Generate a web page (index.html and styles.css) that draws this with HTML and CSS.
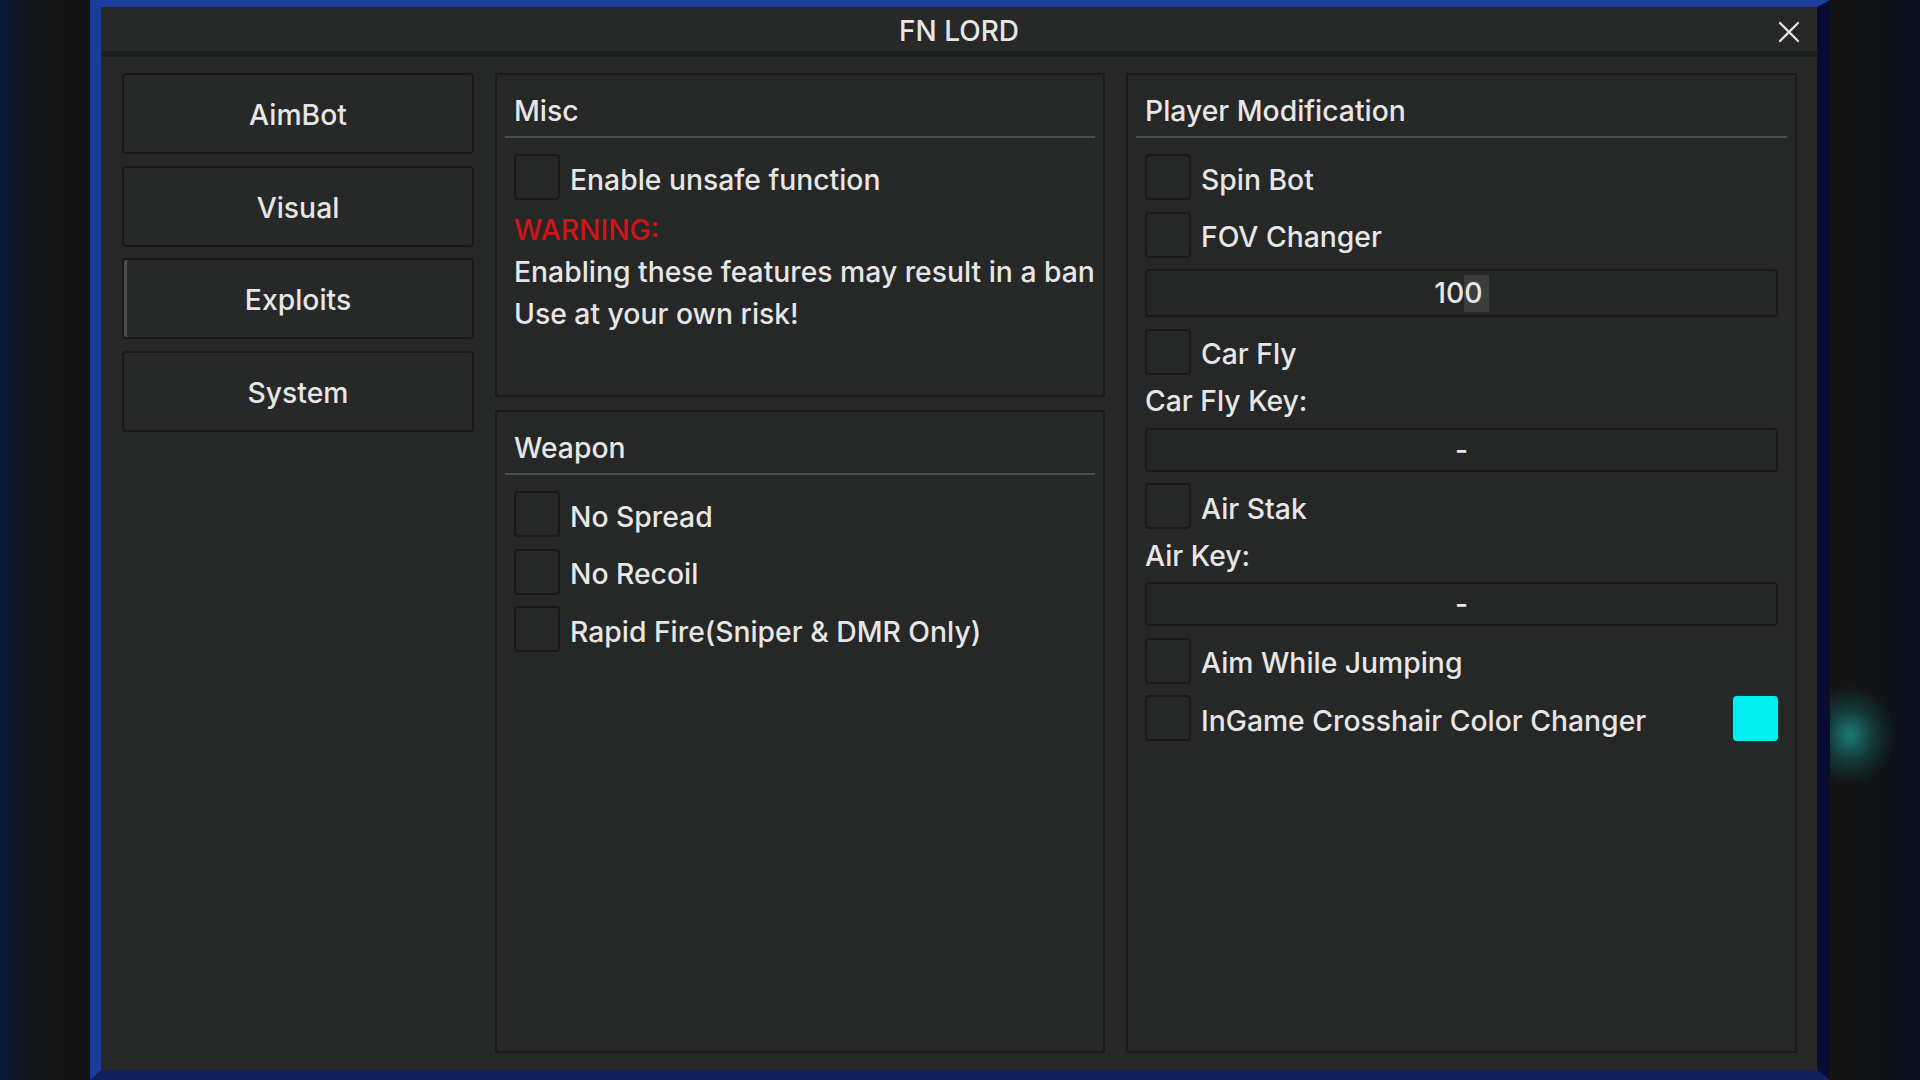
FILE: index.html
```html
<!DOCTYPE html>
<html lang="en">
<head>
    <meta charset="UTF-8">
    <meta name="viewport" content="width=device-width, initial-scale=1.0">
    <title>FN LORD</title>
    <link rel="stylesheet" href="styles.css">
</head>
<body>
    <div class="glow"></div>
    <div class="window">
        <div class="titlebar">
            <span></span>
            <span class="title">FN LORD</span>
            <button class="close" aria-label="Close">
                <svg width="22" height="22" viewBox="0 0 22 22">
                    <path d="M2 2 L20 20 M20 2 L2 20" stroke="#e6e6e6" stroke-width="2.4" stroke-linecap="round"/>
                </svg>
            </button>
        </div>

        <div class="content">
            <nav class="tabs">
                <button class="tab">AimBot</button>
                <button class="tab">Visual</button>
                <button class="tab active">Exploits</button>
                <button class="tab">System</button>
            </nav>

            <div class="column">
                <section class="panel misc">
                    <div class="panel-head">Misc</div>
                    <div class="panel-body">
                        <label class="check"><span class="box"></span>Enable unsafe function</label>
                        <div class="notes">
                            <div class="warning">WARNING:</div>
                            <div>Enabling these features may result in a ban</div>
                            <div>Use at your own risk!</div>
                        </div>
                    </div>
                </section>

                <section class="panel weapon">
                    <div class="panel-head">Weapon</div>
                    <div class="panel-body">
                        <label class="check"><span class="box"></span>No Spread</label>
                        <label class="check"><span class="box"></span>No Recoil</label>
                        <label class="check"><span class="box"></span>Rapid Fire(Sniper &amp; DMR Only)</label>
                    </div>
                </section>
            </div>

            <section class="panel player">
                <div class="panel-head">Player Modification</div>
                <div class="panel-body">
                    <label class="check"><span class="box"></span>Spin Bot</label>
                    <label class="check"><span class="box"></span>FOV Changer</label>
                    <div class="field slider">10<span class="grab">0</span></div>
                    <label class="check"><span class="box"></span>Car Fly</label>
                    <div class="caption">Car Fly Key:</div>
                    <div class="field key">-</div>
                    <label class="check"><span class="box"></span>Air Stak</label>
                    <div class="caption">Air Key:</div>
                    <div class="field key">-</div>
                    <label class="check"><span class="box"></span>Aim While Jumping</label>
                    <label class="check"><span class="box"></span>InGame Crosshair Color Changer<span class="swatch"></span></label>
                </div>
            </section>
        </div>
    </div>
</body>
</html>
```

FILE: styles.css
```css
html, body {
    margin: 0;
    width: 1920px;
    height: 1080px;
    overflow: hidden;
}
body {
    font-family: Inter, "Liberation Sans", sans-serif;
    font-size: 28.3px;
    font-weight: 500;
    color: #e6e6e6;
    background: linear-gradient(to right, #0b1a36 0, #121519 34px, #141414 70px, #141414 1830px, #121416 1870px, #07101f 1920px);
    position: relative;
}
.glow {
    position: absolute;
    left: 1805px;
    top: 685px;
    width: 90px;
    height: 100px;
    background: radial-gradient(closest-side, rgba(30, 190, 180, 0.6), rgba(20, 130, 130, 0.3) 55%, rgba(20, 20, 20, 0) 100%);
}
.window {
    position: relative;
    margin-left: 90px;
    width: 1740px;
    height: 1080px;
    box-sizing: border-box;
    border-style: solid;
    border-width: 7px 13px 10px 11px;
    border-color: #1c3f9f #090c30 #13205e #1a3d9c;
    background: #262727;
    display: flex;
    flex-direction: column;
}
.titlebar {
    height: 44px;
    border-bottom: 6px solid #1d1e1e;
    background: #272828;
    display: grid;
    grid-template-columns: 1fr auto 1fr;
    align-items: center;
    padding: 0 17px;
}
.title {
    font-size: 28px;
    padding-top: 4px;
}
.close {
    justify-self: end;
    background: none;
    border: none;
    padding: 0;
    width: 22px;
    height: 22px;
    margin-top: 5px;
}
.content {
    flex: 1;
    display: grid;
    grid-template-columns: 352px 610px 1fr;
    gap: 21px;
    padding: 16px 20px 17px 21px;
}
.tabs {
    display: flex;
    flex-direction: column;
    gap: 11.5px;
}
.tab {
    height: 81px;
    background: #272828;
    border: 2px solid #1a1a1a;
    border-radius: 4px;
    color: #e6e6e6;
    font-family: inherit;
    font-size: 28.3px;
    font-weight: 500;
    padding-top: 4px;
}
.tab.active {
    box-shadow: inset 3px 0 0 #4a4b4b;
}
.column {
    display: flex;
    flex-direction: column;
    gap: 13px;
}
.panel {
    background: #262727;
    border: 2px solid #1b1b1b;
    border-radius: 2px;
    padding: 0 8px;
}
.misc {
    height: 324px;
    box-sizing: border-box;
}
.weapon {
    flex: 1;
}
.panel-head {
    padding: 21px 9px 10px;
    line-height: 30px;
    border-bottom: 2px solid #4b4c4c;
}
.panel-body {
    padding: 16px 9px 0;
    display: flex;
    flex-direction: column;
    gap: 11.5px;
}
.check {
    display: flex;
    align-items: center;
    height: 46px;
    box-sizing: border-box;
    padding-top: 5px;
}
.box {
    width: 42px;
    height: 42px;
    border: 2px solid #1a1a1a;
    border-radius: 4px;
    background: #262727;
    margin-right: 10px;
    margin-top: -5px;
    flex-shrink: 0;
}
.notes {
    line-height: 42px;
    margin-top: -3px;
    white-space: nowrap;
}
.warning {
    color: #d01418;
}
.field {
    border: 2px solid #1a1a1a;
    border-radius: 4px;
    background: #252626;
    display: flex;
    justify-content: center;
    align-items: center;
}
.slider {
    height: 44px;
}
.grab {
    background: #3c3d3d;
    padding: 0 6px 0 0;
    line-height: 37px;
}
.key {
    height: 40px;
}
.caption {
    height: 30px;
    line-height: 30px;
}
.swatch {
    margin-left: auto;
    margin-top: -5px;
    width: 45px;
    height: 45px;
    border-radius: 4px;
    background: #00f0f0;
    box-shadow: 0 0 0 1px #0d3a3a;
}
```
